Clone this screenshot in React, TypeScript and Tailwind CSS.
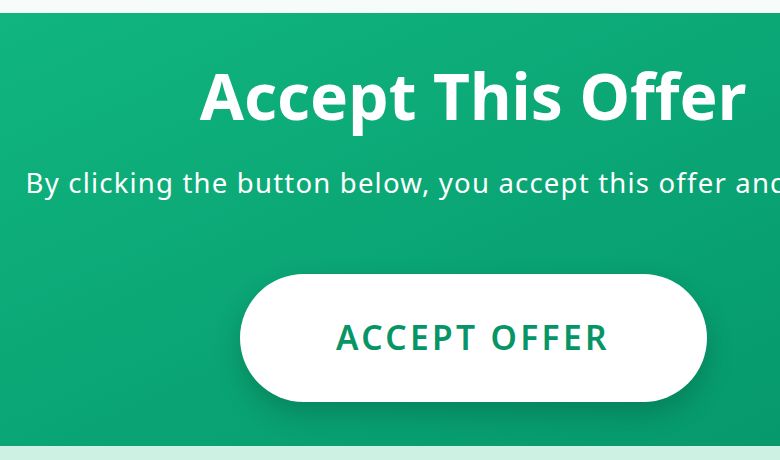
import React from "react";

export default function App() {
  return (
    <div className="h-[460px] w-full overflow-hidden bg-gradient-to-b from-[#f7fcfa] to-[#cdf1e3] pt-[13px] font-['Noto_Sans',sans-serif]">
      <section className="flex h-[433px] w-[946px] flex-col items-center bg-gradient-to-br from-[#10b57f] to-[#05966a] pt-[45px] text-white">
        <h2 className="text-[64px] font-bold leading-[1.2]">Accept This Offer</h2>
        <p className="mt-[30px] whitespace-nowrap text-[27.5px] leading-[1.3] tracking-[1.2px]">
          By clicking the button below, you accept this offer and its terms
        </p>
        <button className="mt-[73px] h-[128px] w-[467px] rounded-full bg-white text-[33.5px] font-semibold uppercase tracking-[0.1em] text-[#079567] shadow-[0_12px_28px_rgba(0,0,0,0.18)]">
          Accept Offer
        </button>
      </section>
    </div>
  );
}
